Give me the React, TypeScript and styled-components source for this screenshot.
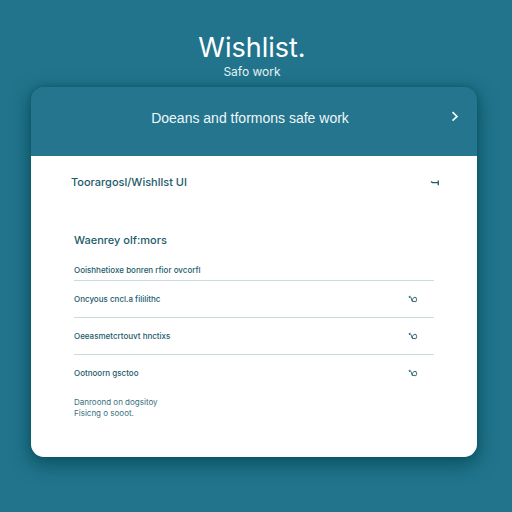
import React from "react";
import styled, { createGlobalStyle } from "styled-components";

const GlobalStyle = createGlobalStyle`
  * { box-sizing: border-box; }
  body {
    margin: 0;
    background: #21748c;
    font-family: Inter, "Liberation Sans", sans-serif;
  }
  h1, h2, h3, p, ul { margin: 0; padding: 0; font-weight: 400; }
`;

const Page = styled.main`
  display: flex;
  flex-direction: column;
  min-height: 100vh;
  padding: 31px 35px 55px 31px;
`;

const Masthead = styled.header`
  display: flex;
  flex-direction: column;
  align-items: center;
  padding: 0 4px 8px 0;
  color: #fff;
  text-align: center;
`;

const Title = styled.h1`
  font-size: 27px;
  line-height: 33px;
`;

const Subtitle = styled.p`
  font-size: 12px;
  line-height: 15px;
  color: #e8f5f7;
`;

const Card = styled.section`
  display: flex;
  flex: 1;
  flex-direction: column;
  overflow: hidden;
  border-radius: 13px;
  box-shadow: 0 6px 18px 2px #0b5361, 0 0 5px #12606f;
`;

const CardHeader = styled.div`
  display: grid;
  grid-template-columns: 32px 1fr 32px;
  align-items: center;
  height: 69px;
  padding: 0 0 8px;
  background: #24758d;
  color: #eef8fa;
`;

const CardTitle = styled.h2`
  grid-column: 2;
  padding-right: 8px;
  font-family: "Liberation Sans", Arial, sans-serif;
  font-size: 14px;
  line-height: 20px;
  text-align: center;
  white-space: nowrap;
`;

const IconButton = styled.button`
  display: flex;
  align-items: center;
  justify-content: center;
  width: 20px;
  height: 20px;
  padding: 0;
  border: 0;
  background: none;
  color: inherit;
  cursor: pointer;
`;

const Body = styled.div`
  flex: 1;
  padding: 16px 32px 32px 40px;
  background: #fff;
  color: #1d5b6b;
`;

const SectionBar = styled.div`
  display: flex;
  align-items: center;
  justify-content: space-between;
  height: 20px;
`;

const SectionTitle = styled.h3`
  font-size: 11px;
  line-height: 20px;
  font-weight: 500;
`;

const Group = styled.div`
  padding: 38px 11px 0 3px;
`;

const GroupTitle = styled(SectionTitle)``;

const GroupNote = styled.p`
  padding-top: 10px;
  font-size: 8px;
  line-height: 20px;
  font-weight: 500;
`;

const Rows = styled.ul`
  list-style: none;
`;

const Row = styled.li`
  display: flex;
  align-items: center;
  justify-content: space-between;
  height: 37px;
  padding-right: 11px;
  border-top: 1px solid #cbdadd;
  font-size: 8px;
  font-weight: 500;
`;

const Footnote = styled.p`
  padding-top: 6px;
  font-size: 8px;
  line-height: 11px;
  color: #376f7d;
`;

const ChevronIcon = () => (
  <svg width="8" height="14" viewBox="0 0 8 14" fill="none" stroke="currentColor" strokeWidth="1.7" aria-hidden="true">
    <path d="M1.5 1.2 6 5.4 1.5 9.6" />
  </svg>
);

const HookIcon = () => (
  <svg width="10" height="8" viewBox="0 0 10 8" fill="none" stroke="currentColor" strokeWidth="1.3" aria-hidden="true">
    <path d="M1 3.4 2.5 4.6 8.2 4.4M8.3 2.5V7.2M6.5 4.6H8" />
  </svg>
);

const MarkIcon = () => (
  <svg width="10" height="8" viewBox="0 0 10 8" fill="none" stroke="currentColor" strokeWidth="0.9" aria-hidden="true">
    <path d="M.7 1.8 2.6 2.2M2 .8 1.6 3M3 2.4 4.2 6.4M5.8 2.6 4.4 4.4 4.6 6.6 6.2 6.3M5.8 2.5 8 2.4 8.7 4.8 7.8 6.8 6 6.3" />
  </svg>
);

const items = [
  "Oncyous cncl.a fililithc",
  "Oeeasmetcrtouvt hnctixs",
  "Ootnoorn gsctoo",
];

export default function App() {
  return (
    <>
      <GlobalStyle />
      <Page>
        <Masthead>
          <Title>Wishlist.</Title>
          <Subtitle>Safo work</Subtitle>
        </Masthead>
        <Card>
          <CardHeader>
            <CardTitle>Doeans and tformons safe work</CardTitle>
            <IconButton type="button" aria-label="Next">
              <ChevronIcon />
            </IconButton>
          </CardHeader>
          <Body>
            <SectionBar>
              <SectionTitle>Toorargosl/Wishllst UI</SectionTitle>
              <IconButton type="button" aria-label="Collapse section">
                <HookIcon />
              </IconButton>
            </SectionBar>
            <Group>
              <GroupTitle>Waenrey olf:mors</GroupTitle>
              <GroupNote>Ooishhetioxe bonren rfior ovcorfl</GroupNote>
              <Rows>
                {items.map((item) => (
                  <Row key={item}>
                    {item}
                    <IconButton type="button" aria-label={`Edit ${item}`}>
                      <MarkIcon />
                    </IconButton>
                  </Row>
                ))}
              </Rows>
              <Footnote>
                Danroond on dogsitoy
                <br />
                Fisicng o sooot.
              </Footnote>
            </Group>
          </Body>
        </Card>
      </Page>
    </>
  );
}
